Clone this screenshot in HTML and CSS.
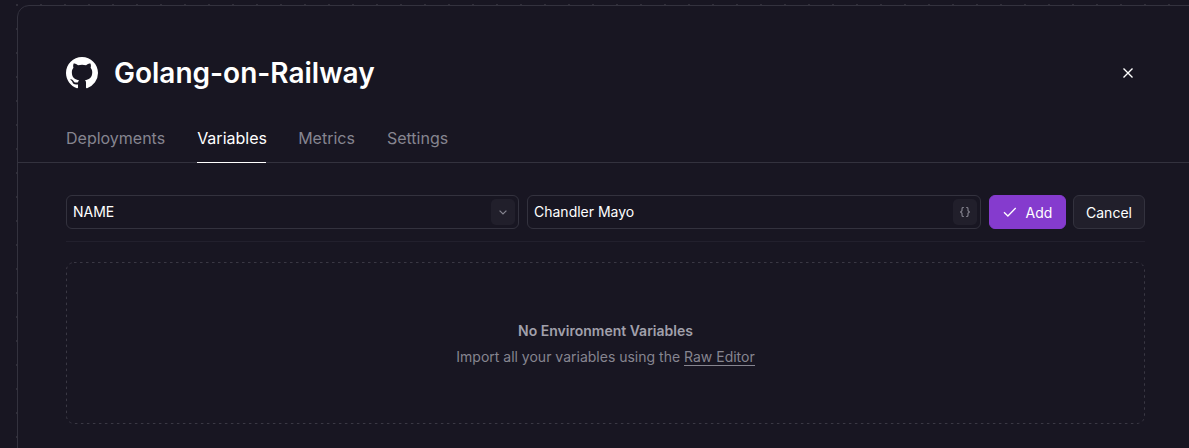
FILE: index.html
```html
<!DOCTYPE html>
<html lang="en">
<head>
<meta charset="utf-8">
<title>Golang-on-Railway</title>
<link rel="stylesheet" href="styles.css">
</head>
<body>
<main class="panel">
  <header class="header">
    <svg class="logo" viewBox="0 0 16 16" fill="currentColor"><path d="M8 0C3.58 0 0 3.58 0 8c0 3.54 2.29 6.53 5.47 7.59.4.07.55-.17.55-.38 0-.19-.01-.82-.01-1.49-2.01.37-2.53-.49-2.69-.94-.09-.23-.48-.94-.82-1.13-.28-.15-.68-.52-.01-.53.63-.01 1.08.58 1.23.82.72 1.21 1.87.87 2.33.66.07-.52.28-.87.51-1.07-1.78-.2-3.64-.89-3.64-3.95 0-.87.31-1.59.82-2.15-.08-.2-.36-1.02.08-2.12 0 0 .67-.21 2.2.82.64-.18 1.32-.27 2-.27s1.36.09 2 .27c1.53-1.04 2.2-.82 2.2-.82.44 1.1.16 1.92.08 2.12.51.56.82 1.27.82 2.15 0 3.07-1.87 3.75-3.65 3.95.29.25.54.73.54 1.48 0 1.07-.01 1.93-.01 2.2 0 .21.15.46.55.38A8.01 8.01 0 0 0 16 8c0-4.42-3.58-8-8-8z"/></svg>
    <h1 class="title">Golang-on-Railway</h1>
    <button class="close" aria-label="Close"><svg width="10" height="10" viewBox="0 0 10 10"><path d="M.5.5l9 9M9.500.5l-9 9" stroke="currentColor" stroke-width="1.35" fill="none"/></svg></button>
  </header>
  <nav class="tabs">
    <a class="tab">Deployments</a>
    <a class="tab active">Variables</a>
    <a class="tab">Metrics</a>
    <a class="tab">Settings</a>
  </nav>
  <section class="content">
    <div class="form">
      <div class="field name"><span class="text">NAME</span><span class="chip"><svg width="8" height="5" viewBox="0 0 8 5"><path d="M.6.6L4 4 7.400.6" stroke="currentColor" fill="none" stroke-width="1.2"/></svg></span></div>
      <div class="field value"><span class="text">Chandler Mayo</span><span class="chip"><svg width="10" height="10" viewBox="0 0 10 10"><path d="M3.800.5H3.300Q2 .5 2 1.800V3.800L.5 5 2 6.200V8.200Q2 9.500 3.300 9.500H3.800M6.200.5H6.700Q8 .5 8 1.800V3.800L9.500 5 8 6.200V8.200Q8 9.500 6.700 9.500H6.200" stroke="currentColor" stroke-width="1.1" fill="none"/></svg></span></div>
      <button class="btn add"><svg width="14" height="10" viewBox="0 0 14 10"><path d="M1 5.200L4.900 9 12.700 1" stroke="currentColor" fill="none" stroke-width="1.300"/></svg>Add</button>
      <button class="btn cancel">Cancel</button>
    </div>
    <div class="empty">
      <svg class="outline" width="1079" height="162"><rect x=".5" y=".5" width="1078" height="161" rx="7.500"/></svg>
      <p class="empty-title">No Environment Variables</p>
      <p class="empty-text">Import all your variables using the <a class="link">Raw Editor</a></p>
    </div>
  </section>
</main>
</body>
</html>
```
FILE: styles.css
```css
* { box-sizing: border-box; }
html { overflow: hidden; }
body {
  margin: 0;
  height: 448px;
  padding: 5px 0 0 17px;
  overflow: hidden;
  background: #181622 radial-gradient(circle at 1px 1px, #302e39 1.2px, transparent 1.3px) 16px 4px / 24px 24px;
  font-family: Inter, sans-serif;
  color: #fff;
}
.panel {
  width: 1190px;
  height: 460px;
  border: 1px solid #33323e;
  border-top-left-radius: 12px;
  background: #181622;
}
.header {
  display: flex;
  align-items: center;
  height: 64px;
  margin-top: 35px;
  padding: 0 73px 0 48px;
}
.logo { width: 32px; height: 32px; margin-right: 16px; }
.title { margin: 0; font-size: 28px; line-height: 36px; font-weight: 600; }
.close {
  display: flex;
  margin-left: auto;
  padding: 0;
  border: 0;
  background: none;
  color: #fff;
}
.tabs {
  display: flex;
  gap: 32px;
  height: 58px;
  padding: 21px 48px 0;
  border-bottom: 1px solid #33323e;
}
.tab { height: 37px; font-size: 16px; line-height: 24px; color: #868590; }
.tab.active { width: 69px; color: #fff; border-bottom: 1px solid #fff; }
.content { width: 1079px; margin: 32px 0 0 48px; }
.form {
  display: flex;
  height: 47px;
  padding-bottom: 12px;
  border-bottom: 1px solid #22202d;
}
.field {
  display: flex;
  align-items: center;
  justify-content: space-between;
  height: 34px;
  padding: 0 3px 0 6px;
  border: 1px solid #33323e;
  border-radius: 6px;
  font-size: 14px;
}
.text { padding-bottom: 2px; }
.name { width: 453px; }
.value { width: 454px; margin-left: 8px; }
.chip {
  display: flex;
  align-items: center;
  justify-content: center;
  width: 24px;
  height: 26px;
  border-radius: 5px;
  background: #211f2b;
  color: #868590;
}
.btn {
  display: flex;
  align-items: center;
  justify-content: center;
  height: 34px;
  padding: 0;
  border: 1px solid #33323e;
  border-radius: 6px;
  background: #211f2b;
  color: #fff;
  font: 400 14px Inter, sans-serif;
}
.add { width: 77px; margin-left: 8px; gap: 9px; border-color: #853bce; background: #853bce; }
.add svg { margin-top: -1px; }
.cancel { width: 72px; margin-left: 7px; }
.empty {
  position: relative;
  height: 162px;
  margin-top: 20px;
  padding-top: 59px;
  text-align: center;
  font-size: 14px;
  line-height: 20px;
}
.outline { position: absolute; inset: 0; }
.outline rect { fill: none; stroke: #3a3844; stroke-dasharray: 2.5 3.5; }
.empty p { margin: 0; }
.empty-title { font-weight: 600; color: #a1a0ab; }
.empty .empty-text { margin-top: 6px; color: #868590; }
.link { border-bottom: 1px solid #868590; }
```
